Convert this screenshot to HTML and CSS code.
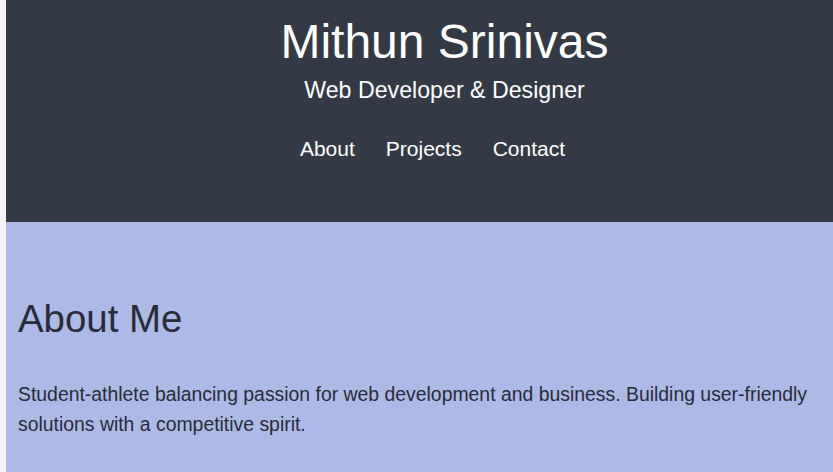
FILE: index.html
```html
<!DOCTYPE html>
<html lang="en">
<head>
<meta charset="utf-8">
<title>Mithun Srinivas</title>
<link rel="stylesheet" href="styles.css">
</head>
<body>
<div class="page">
  <header class="site-header">
    <h1 class="title">Mithun Srinivas</h1>
    <p class="subtitle">Web Developer &amp; Designer</p>
    <nav class="nav">
      <a href="#about">About</a>
      <a href="#projects">Projects</a>
      <a href="#contact">Contact</a>
    </nav>
  </header>
  <section class="about" id="about">
    <h2 class="about-title">About Me</h2>
    <p class="about-text">Student-athlete balancing passion for web development and business. Building user-friendly solutions with a competitive spirit.</p>
  </section>
</div>
</body>
</html>
```

FILE: styles.css
```css
html, body {
  margin: 0;
  padding: 0;
  height: 100%;
}
body {
  background: #f4f4f4;
  font-family: "Liberation Sans", Arial, sans-serif;
  overflow: hidden;
}
.page {
  margin-left: 6px;
  min-height: 100%;
  display: flex;
  flex-direction: column;
}
.site-header {
  background: #333a45;
  color: #ffffff;
  padding: 13.7px 0 60.5px 50px;
  text-align: center;
}
.title {
  margin: 0;
  font-size: 48px;
  line-height: 56px;
  font-weight: normal;
}
.subtitle {
  margin: 6.6px 0 0;
  font-size: 23.2px;
  line-height: 28px;
}
.nav {
  margin-top: 33.2px;
  display: flex;
  justify-content: center;
  gap: 31px;
  padding-right: 24px;
  font-size: 21px;
  line-height: 24px;
}
.nav a {
  color: #ffffff;
  text-decoration: none;
}
.about {
  flex: 1;
  background: #adbae6;
  color: #282c39;
  padding: 75.2px 12px 40px 12px;
}
.about-title {
  margin: 0;
  font-size: 38.4px;
  line-height: 44px;
  font-weight: normal;
}
.about-text {
  margin: 37.7px 0 0;
  font-size: 19.4px;
  line-height: 30px;
}
```
